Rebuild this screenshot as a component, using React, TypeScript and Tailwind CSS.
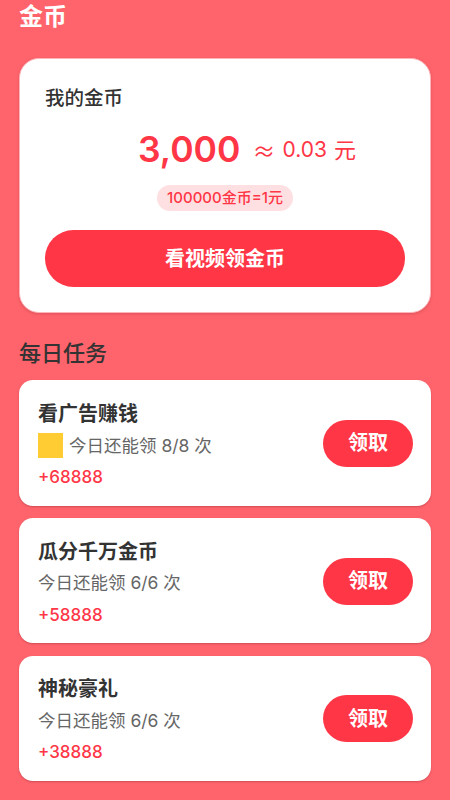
const font = "font-['Inter','Noto_Sans_CJK_SC',sans-serif]";

interface Task {
  title: string;
  remain: string;
  reward: string;
  hasAd?: boolean;
}

const tasks: Task[] = [
  { title: "看广告赚钱", remain: "今日还能领 8/8 次", reward: "+68888", hasAd: true },
  { title: "瓜分千万金币", remain: "今日还能领 6/6 次", reward: "+58888" },
  { title: "神秘豪礼", remain: "今日还能领 6/6 次", reward: "+38888" },
];

function TaskCard({ task }: { task: Task }) {
  return (
    <div className="flex h-[125.5px] items-center justify-between rounded-[14px] bg-white pl-[19px] pr-[18px] shadow-[0_1px_2px_rgba(120,30,40,0.35)]">
      <div className="flex flex-col pt-[4px]">
        <div className="text-[20px] leading-[28px] font-semibold text-[#333333]">{task.title}</div>
        <div className="mt-[3px] flex h-[30px] items-center text-[17.5px] text-[#666666]">
          {task.hasAd && <div className="mr-[6px] h-[25px] w-[25px] bg-[#ffcd33]" />}
          <span className="whitespace-pre">{task.remain}</span>
        </div>
        <div className="mt-[3px] text-[17px] leading-[26px] font-medium text-[#ff3646]">{task.reward}</div>
      </div>
      <button className="mt-[1px] h-[47px] w-[90px] rounded-full bg-[#ff3646] text-[20px] font-semibold text-white">领取</button>
    </div>
  );
}

export default function App() {
  return (
    <div className={`${font} h-[800px] w-[450px] overflow-hidden bg-[#ff646c] px-[19px]`}>
      <h1 className="h-[58px] pt-[1px] text-[24px] leading-[32px] font-semibold text-white">金币</h1>

      <div className="flex h-[255px] flex-col rounded-[20px] border border-[#ffb4ba] bg-white px-[25px] shadow-[0_1px_3px_rgba(120,30,40,0.25)]">
        <div className="mt-[24px] text-[19.5px] leading-[30px] font-medium text-[#333333]">我的金币</div>
        <div className="mt-[12px] flex h-[50px] items-center justify-center pl-[44px] text-[#ff3646]">
          <span className="text-[35.5px] font-semibold">3,000</span>
          <span className="ml-[12px] font-['Noto_Sans_CJK_SC',sans-serif] text-[23px]">≈</span>
          <span className="ml-[7px] text-[21px]">0.03</span>
          <span className="ml-[7px] text-[22px]">元</span>
        </div>
        <div className="mt-[10px] flex justify-center">
          <span className="flex h-[26px] items-center rounded-full bg-[#ffe0e2] px-[10px] text-[15px] font-medium text-[#ff3646]">100000金币=1元</span>
        </div>
        <button className="mt-[19px] h-[57px] w-full rounded-full bg-[#ff3646] text-[20px] font-semibold text-white">看视频领金币</button>
      </div>

      <h2 className="mt-[24px] mb-[10px] h-[33px] text-[22px] leading-[33px] font-medium text-[#333333]">每日任务</h2>

      <div className="flex flex-col gap-[12.25px]">
        {tasks.map((t) => (
          <TaskCard key={t.title} task={t} />
        ))}
      </div>
    </div>
  );
}
